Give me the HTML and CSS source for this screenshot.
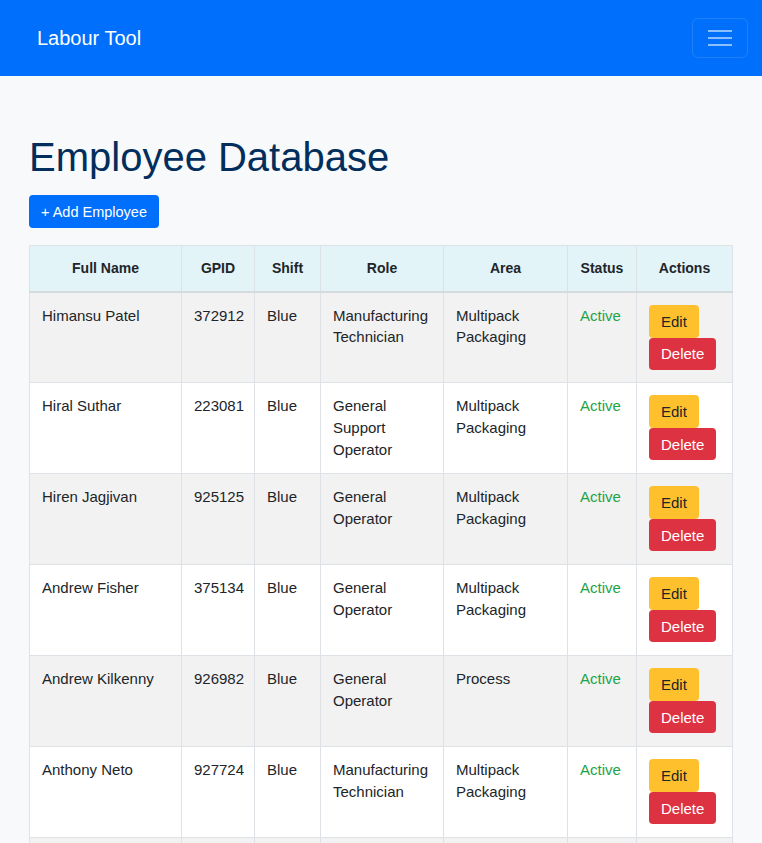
FILE: index.html
```html
<!DOCTYPE html>
<html>
<head>
<meta charset="utf-8">
<link rel="stylesheet" href="styles.css">
</head>
<body>
<nav class="navbar">
  <span class="brand">Labour Tool</span>
  <button class="toggler" aria-label="menu">
    <svg width="24" height="20" viewBox="0 0 24 20"><path d="M0 3h24M0 10h24M0 17h24" stroke="rgba(255,255,255,0.55)" stroke-width="2"/></svg>
  </button>
</nav>
<main class="container">
  <h1 class="title">Employee Database</h1>
  <button class="btn btn-primary">+ Add Employee</button>
  <table class="table">
    <colgroup>
      <col class="c-name"><col class="c-gpid"><col class="c-shift"><col class="c-role"><col class="c-area"><col class="c-status"><col class="c-actions">
    </colgroup>
    <thead>
      <tr><th>Full Name</th><th>GPID</th><th>Shift</th><th>Role</th><th>Area</th><th>Status</th><th>Actions</th></tr>
    </thead>
    <tbody>
      <tr><td>Himansu Patel</td><td>372912</td><td>Blue</td><td>Manufacturing Technician</td><td>Multipack Packaging</td><td class="active">Active</td><td><button class="btn btn-edit">Edit</button><button class="btn btn-delete">Delete</button></td></tr>
      <tr><td>Hiral Suthar</td><td>223081</td><td>Blue</td><td>General Support Operator</td><td>Multipack Packaging</td><td class="active">Active</td><td><button class="btn btn-edit">Edit</button><button class="btn btn-delete">Delete</button></td></tr>
      <tr><td>Hiren Jagjivan</td><td>925125</td><td>Blue</td><td>General Operator</td><td>Multipack Packaging</td><td class="active">Active</td><td><button class="btn btn-edit">Edit</button><button class="btn btn-delete">Delete</button></td></tr>
      <tr><td>Andrew Fisher</td><td>375134</td><td>Blue</td><td>General Operator</td><td>Multipack Packaging</td><td class="active">Active</td><td><button class="btn btn-edit">Edit</button><button class="btn btn-delete">Delete</button></td></tr>
      <tr><td>Andrew Kilkenny</td><td>926982</td><td>Blue</td><td>General Operator</td><td>Process</td><td class="active">Active</td><td><button class="btn btn-edit">Edit</button><button class="btn btn-delete">Delete</button></td></tr>
      <tr><td>Anthony Neto</td><td>927724</td><td>Blue</td><td>Manufacturing Technician</td><td>Multipack Packaging</td><td class="active">Active</td><td><button class="btn btn-edit">Edit</button><button class="btn btn-delete">Delete</button></td></tr>
      <tr><td>Ben Carter</td><td>928311</td><td>Blue</td><td>General Operator</td><td>Process</td><td class="active">Active</td><td><button class="btn btn-edit">Edit</button><button class="btn btn-delete">Delete</button></td></tr>
    </tbody>
  </table>
</main>
</body>
</html>
```
FILE: styles.css
```css
* { box-sizing: border-box; }
html, body { margin: 0; padding: 0; }
body {
  background: #f8f9fa;
  font-family: "Liberation Sans", Arial, sans-serif;
  color: #212529;
  font-size: 15px;
  line-height: 1.45;
}
.navbar {
  height: 76px;
  background: #006ffc;
  display: flex;
  align-items: center;
  justify-content: space-between;
  padding: 0 14px 0 37px;
}
.brand {
  color: #fff;
  font-size: 20px;
  line-height: 1.2;
}
.toggler {
  width: 56px;
  height: 40px;
  background: transparent;
  border: 1px solid rgba(255,255,255,0.12);
  border-radius: 6px;
  display: flex;
  align-items: center;
  justify-content: center;
  padding: 0;
}
.toggler svg { display: block; }
.container {
  padding: 0 30px 0 29px;
}
.title {
  margin: 0;
  padding-top: 57px;
  font-size: 40px;
  font-weight: 400;
  line-height: 1.2;
  color: #012e5c;
}
.btn {
  display: inline-block;
  border: none;
  border-radius: 4px;
  font-family: inherit;
  cursor: pointer;
}
.btn-primary {
  margin-top: 14px;
  background: #006ffc;
  color: #fff;
  font-size: 14.5px;
  height: 33px;
  padding: 0 12px;
}
.table {
  margin-top: 17px;
  width: 703px;
  border-collapse: collapse;
  table-layout: fixed;
  border: 1px solid #dee2e6;
}
.c-name { width: 152px; }
.c-gpid { width: 73px; }
.c-shift { width: 66px; }
.c-role { width: 123px; }
.c-area { width: 124px; }
.c-status { width: 69px; }
.c-actions { width: 96px; }
th, td {
  border: 1px solid #dee2e6;
  padding: 12px;
  vertical-align: top;
  text-align: left;
}
th {
  background: #e3f4f9;
  text-align: center;
  font-weight: 700;
  font-size: 14px;
  border-bottom: 2px solid #d4dadf;
  padding: 12px 8px;
  height: 46px;
  vertical-align: middle;
}
tbody tr:nth-child(odd) td { background: #f2f2f2; }
tbody tr:nth-child(even) td { background: #fff; }
td { height: 91px; }
.active { color: #1ea448; }
.btn-edit {
  display: block;
  background: #ffc02d;
  color: #212529;
  font-size: 15px;
  height: 33px;
  padding: 0 12px;
}
.btn-delete {
  display: block;
  background: #dc3242;
  color: #fff;
  font-size: 15px;
  height: 32px;
  padding: 0 12px;
}
```
